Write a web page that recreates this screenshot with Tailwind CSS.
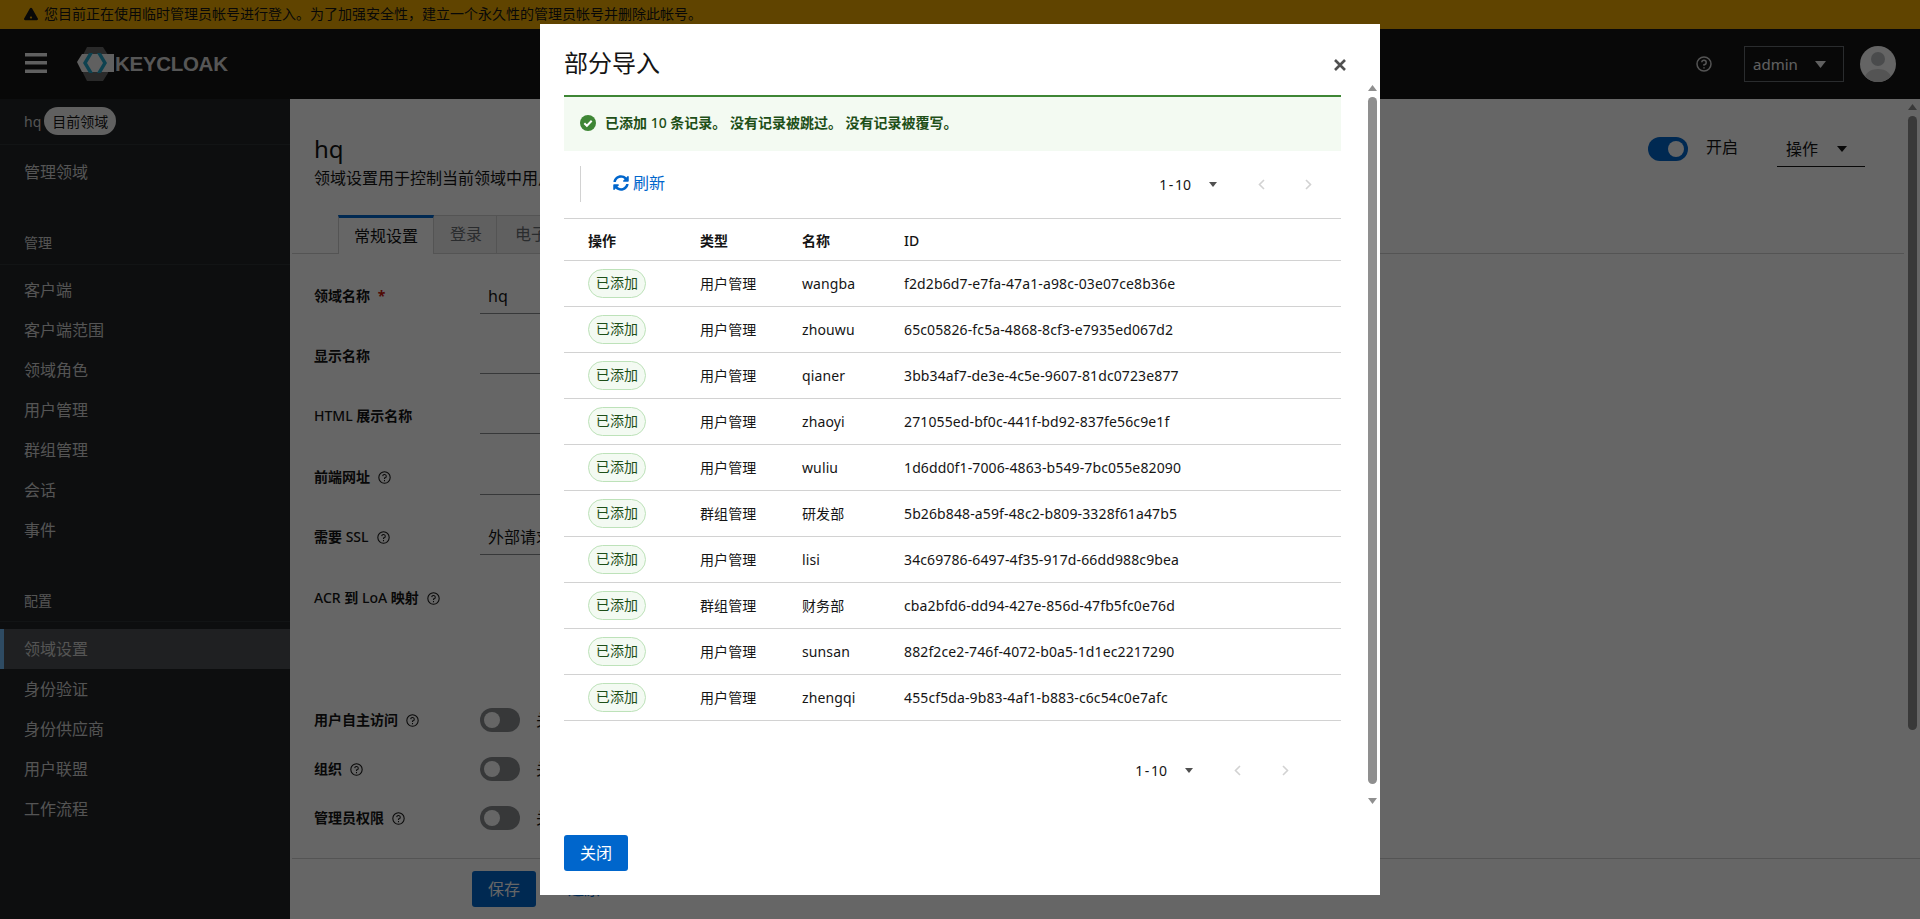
<!DOCTYPE html>
<html lang="zh-CN">
<head>
  <meta charset="UTF-8">
  <title>Keycloak 部分导入</title>
  <script src="https://cdn.jsdelivr.net/npm/@tailwindcss/browser@4"></script>
</head>
<body class="h-screen overflow-hidden font-['Noto_Sans','Noto_Sans_CJK_SC',sans-serif] text-[14px] text-[#151515]">
  <div class="h-screen flex flex-col">
    <!-- Warning banner -->
    <div class="h-[29px] shrink-0 bg-[#f0ab00] flex items-center pl-6 pb-[2px] gap-1.5 text-[14px]">
      <svg class="w-[14px] h-[14px]" viewBox="0 0 576 512"><path fill="#151515" d="M569.5 440 329.6 24c-18.400-32-64.700-32-83.200 0L6.500 440c-18.400 31.900 4.600 72 41.600 72H528c36.800 0 60-40 41.500-72zM288 354c25.400 0 46 20.600 46 46s-20.600 46-46 46-46-20.600-46-46 20.600-46 46-46zm-43.700-165.400 7.400 136c.3 6.400 5.600 11.400 12 11.400h48.500c6.400 0 11.600-5 12-11.400l7.400-136c.4-6.900-5.100-12.600-12-12.600h-63.400c-6.900 0-12.300 5.700-11.900 12.600z"/></svg>
      <span>您目前正在使用临时管理员帐号进行登入。为了加强安全性，建立一个永久性的管理员帐号并删除此帐号。</span>
    </div>

    <!-- Masthead -->
    <header class="h-[70px] shrink-0 bg-[#151515] flex items-center text-white">
      <svg class="ml-[25px] mb-[2px] w-[22px] h-[20px]" viewBox="0 0 22 20"><path fill="#f0f0f0" d="M0 0h22v3.500H0zM0 8h22v3.500H0zM0 16.500h22V20H0z"/></svg>
      <div class="ml-[30px] flex items-center">
        <svg class="w-[38px] h-[34px]" viewBox="0 0 38 34">
          <path fill="#6a6a6a" d="M10 0h16l5 8v18l-5 8H10l-4-8V8z"/>
          <path fill="#f0f0f0" d="M0 15l5-8h32v18H5z"/>
          <path fill="#25a5c8" d="M12 6h4l-6 10 6 10h-4L6 16zM24 6h-4l6 10-6 10h4l6-10z"/>
        </svg>
        <span class="font-['Liberation_Sans'] font-bold text-[20.500px] tracking-[-0.3px] text-[#d8d8d8]">KEYCLOAK</span>
      </div>
      <svg class="ml-auto w-4 h-4" viewBox="0 0 16 16" fill="none" stroke="#d2d2d2" stroke-width="1.500"><circle cx="8" cy="8" r="7"/><path d="M5.800 6.300A2.200 2.200 0 1 1 8 8.700v1.100"/><path d="M8 11.200v1.400"/></svg>
      <div class="ml-[32px] w-[100px] h-[36px] border border-[#6a6e73] flex items-center pl-2 text-[15px] text-[#f0f0f0]">
        admin
        <svg class="ml-[17px] w-[11px] h-[7px]" viewBox="0 0 11 7"><path fill="#f0f0f0" d="M0 0h11L5.500 7z"/></svg>
      </div>
      <svg class="ml-4 mr-6 w-9 h-9 rounded-full" viewBox="0 0 36 36">
        <rect width="36" height="36" fill="#fafafa"/>
        <circle cx="18" cy="13" r="7" fill="#b8bbbe"/>
        <path fill="#d2d2d2" d="M4 36c0-9 6-13 14-13s14 4 14 13z"/>
      </svg>
    </header>

    <div class="flex flex-1 min-h-0">
      <!-- Sidebar -->
      <nav class="w-[290px] shrink-0 bg-[#212427] text-[#d2d2d2] text-[16px]">
        <div class="h-[46px] flex items-center pl-6 pb-[1px] gap-[3px] border-b border-[#2f3235]">
          <span class="text-[14px]">hq</span>
          <span class="h-[28px] px-[8px] rounded-full bg-[#f0f0f0] text-[#151515] text-[14px] flex items-center">目前领域</span>
        </div>
        <div class="h-[54px] flex items-center pl-6">管理领域</div>
        <div class="mt-[22px] h-[44px] flex items-center pl-6 text-[14px] border-b border-[#2f3235]">管理</div>
        <ul class="mt-[5px]">
          <li class="h-10 flex items-center pl-6">客户端</li>
          <li class="h-10 flex items-center pl-6">客户端范围</li>
          <li class="h-10 flex items-center pl-6">领域角色</li>
          <li class="h-10 flex items-center pl-6">用户管理</li>
          <li class="h-10 flex items-center pl-6">群组管理</li>
          <li class="h-10 flex items-center pl-6">会话</li>
          <li class="h-10 flex items-center pl-6">事件</li>
        </ul>
        <div class="mt-[30px] h-[42px] flex items-center pl-6 text-[14px] border-b border-[#2f3235]">配置</div>
        <ul class="mt-[7px]">
          <li class="h-10 pb-[1px] flex items-center pl-5 border-l-4 border-[#73bcf7] bg-[#4f5255]">领域设置</li>
          <li class="h-10 pb-[1px] flex items-center pl-6">身份验证</li>
          <li class="h-10 pb-[1px] flex items-center pl-6">身份供应商</li>
          <li class="h-10 pb-[1px] flex items-center pl-6">用户联盟</li>
          <li class="h-10 pb-[1px] flex items-center pl-6">工作流程</li>
        </ul>
      </nav>

      <!-- Realm settings -->
      <main class="flex-1 min-w-0 bg-white flex flex-col relative">
        <div class="flex h-[116px] shrink-0 pl-6 pr-[55px] pt-[34px]">
          <div>
            <h1 class="text-[24px] leading-[32px]">hq</h1>
            <p class="text-[16px] leading-[24px] mt-[1px]">领域设置用于控制当前领域中用户、应用程序、角色和组的选项。</p>
          </div>
          <div class="ml-auto flex items-start">
            <span class="mt-[4px] w-10 h-6 rounded-full bg-[#06c] flex items-center justify-end pr-1"><span class="w-4 h-4 rounded-full bg-white"></span></span>
            <span class="ml-[18px] mt-[2px] leading-6 text-[16px]">开启</span>
            <div class="ml-[39px] w-[88px] h-[34px] pb-[2px] border-b border-[#151515] flex items-center pl-[9px] text-[16px]">
              操作
              <svg class="ml-[19px] w-[10px] h-[6px]" viewBox="0 0 10 6"><path fill="#151515" d="M0 0h10L5 6z"/></svg>
            </div>
          </div>
        </div>

        <div class="h-[39px] shrink-0 flex border-b border-[#d2d2d2] ml-[2px] mr-[16px] pl-[46px]">
          <div class="w-[96px] h-[39px] pb-[1px] border-t-[3px] border-x border-t-[#06c] border-x-[#d2d2d2] bg-white flex items-center justify-center text-[16px]">常规设置</div>
          <div class="w-[63px] pl-[2px] pb-[1px] border-t border-r border-[#d2d2d2] bg-[#f0f0f0] text-[#6a6e73] flex items-center justify-center text-[16px]">登录</div>
          <div class="w-[100px] pb-[1px] border-t border-r border-[#d2d2d2] bg-[#f0f0f0] text-[#6a6e73] flex items-center pl-[18px] text-[16px]">电子邮件</div>
        </div>

        <form class="flex-1 pl-6 pt-[24px]">
          <div class="flex items-center h-[36px] mb-[24px]">
            <label class="w-[166px] pb-[2px] font-bold">领域名称 <span class="text-[#c9190b] ml-1">*</span></label>
            <span class="w-[300px] h-[36px] border-b border-[#8a8d90] flex items-center pl-2 text-[16px]">hq</span>
          </div>
          <div class="flex items-center h-[36px] mb-[24px]">
            <label class="w-[166px] pb-[2px] font-bold">显示名称</label>
            <span class="w-[300px] h-[36px] border-b border-[#8a8d90]"></span>
          </div>
          <div class="flex items-center h-[36px] mb-[25px]">
            <label class="w-[166px] pb-[2px] font-bold"><span class="font-medium">HTML</span> 展示名称</label>
            <span class="w-[300px] h-[36px] border-b border-[#8a8d90]"></span>
          </div>
          <div class="flex items-center h-[36px] mb-[24px]">
            <label class="w-[166px] pb-[2px] font-bold flex items-center gap-2">前端网址
              <svg class="w-[13px] h-[13px] mt-[2px]" viewBox="0 0 16 16" fill="none" stroke="#151515" stroke-width="1.300"><circle cx="8" cy="8" r="7"/><path d="M5.800 6.300A2.200 2.200 0 1 1 8 8.700v1.100M8 11.200v1.400"/></svg>
            </label>
            <span class="w-[300px] h-[36px] border-b border-[#8a8d90]"></span>
          </div>
          <div class="flex items-center h-[36px] mb-[25px]">
            <label class="w-[166px] pb-[2px] font-bold flex items-center gap-2"><span>需要 <span class="font-medium">SSL</span></span>
              <svg class="w-[13px] h-[13px] mt-[2px]" viewBox="0 0 16 16" fill="none" stroke="#151515" stroke-width="1.300"><circle cx="8" cy="8" r="7"/><path d="M5.800 6.300A2.200 2.200 0 1 1 8 8.700v1.100M8 11.200v1.400"/></svg>
            </label>
            <span class="w-[300px] h-[36px] border-b border-[#8a8d90] flex items-center pl-2 text-[16px]">外部请求</span>
          </div>
          <div class="flex items-center h-[36px] mb-[92px]">
            <label class="w-[166px] pb-[2px] font-bold flex items-center gap-2"><span><span class="font-medium">ACR</span> 到 <span class="font-medium">LoA</span> 映射</span>
              <svg class="w-[13px] h-[13px] mt-[2px]" viewBox="0 0 16 16" fill="none" stroke="#151515" stroke-width="1.300"><circle cx="8" cy="8" r="7"/><path d="M5.800 6.300A2.200 2.200 0 1 1 8 8.700v1.100M8 11.200v1.400"/></svg>
            </label>
          </div>
          <div class="flex items-center h-6 mb-[25px]">
            <label class="w-[166px] pb-[2px] font-bold flex items-center gap-2">用户自主访问
              <svg class="w-[13px] h-[13px] mt-[2px]" viewBox="0 0 16 16" fill="none" stroke="#151515" stroke-width="1.300"><circle cx="8" cy="8" r="7"/><path d="M5.800 6.300A2.200 2.200 0 1 1 8 8.700v1.100M8 11.200v1.400"/></svg>
            </label>
            <span class="w-10 h-6 rounded-full bg-[#8a8d90] flex items-center pl-1"><span class="w-4 h-4 rounded-full bg-white"></span></span>
            <span class="ml-4 text-[16px]">关闭</span>
          </div>
          <div class="flex items-center h-6 mb-[25px]">
            <label class="w-[166px] pb-[2px] font-bold flex items-center gap-2">组织
              <svg class="w-[13px] h-[13px] mt-[2px]" viewBox="0 0 16 16" fill="none" stroke="#151515" stroke-width="1.300"><circle cx="8" cy="8" r="7"/><path d="M5.800 6.300A2.200 2.200 0 1 1 8 8.700v1.100M8 11.200v1.400"/></svg>
            </label>
            <span class="w-10 h-6 rounded-full bg-[#8a8d90] flex items-center pl-1"><span class="w-4 h-4 rounded-full bg-white"></span></span>
            <span class="ml-4 text-[16px]">关闭</span>
          </div>
          <div class="flex items-center h-6">
            <label class="w-[166px] pb-[2px] font-bold flex items-center gap-2">管理员权限
              <svg class="w-[13px] h-[13px] mt-[2px]" viewBox="0 0 16 16" fill="none" stroke="#151515" stroke-width="1.300"><circle cx="8" cy="8" r="7"/><path d="M5.800 6.300A2.200 2.200 0 1 1 8 8.700v1.100M8 11.200v1.400"/></svg>
            </label>
            <span class="w-10 h-6 rounded-full bg-[#8a8d90] flex items-center pl-1"><span class="w-4 h-4 rounded-full bg-white"></span></span>
            <span class="ml-4 text-[16px]">关闭</span>
          </div>
        </form>

        <div class="h-[61px] shrink-0 ml-[2px] border-t border-[#d2d2d2] flex items-center pl-[180px] gap-[32px] text-[16px]">
          <span class="w-16 h-9 rounded-[3px] bg-[#06c] text-white flex items-center justify-center">保存</span>
          <span class="text-[#06c]">还原</span>
        </div>

        <!-- Page scrollbar -->
        <div class="absolute right-[3px] top-[5px] w-[9px] flex flex-col items-center">
          <svg class="w-[9px] h-[6px] shrink-0" viewBox="0 0 9 6"><path fill="#8f8f8f" d="M0 6h9L4.500 0z"/></svg>
          <div class="mt-[6px] h-[614px] w-[9px] rounded-full bg-[#8f8f8f]"></div>
        </div>
      </main>
    </div>
  </div>

  <!-- Backdrop + import dialog -->
  <div class="fixed inset-0 bg-black/60 flex justify-center items-start pt-[24px]">
    <section class="w-[840px] h-[871px] bg-white flex flex-col relative">
      <div class="h-[71px] shrink-0 pl-6 pr-[34px] pt-[19px] flex justify-between">
        <h2 class="text-[24px] leading-[40px]">部分导入</h2>
        <svg class="mt-[16px] w-[12px] h-[12px]" viewBox="0 0 12 12"><path stroke="#505050" stroke-width="2.600" d="M1 1l10 10M11 1L1 11"/></svg>
      </div>

      <div class="flex-1 min-h-0 relative pl-6 pr-[39px]">
        <div class="h-[56px] pb-[3px] bg-[#f3faf2] border-t-2 border-[#3e8635] flex items-center pl-4 gap-[9px] font-bold text-[#1e4f18]">
          <svg class="w-[16px] h-[16px]" viewBox="0 0 16 16"><circle cx="8" cy="8" r="8" fill="#3e8635"/><path d="M4.300 8.200l2.600 2.600 4.800-5" fill="none" stroke="#fff" stroke-width="2"/></svg>
          <span>已添加 <span class="font-medium">10</span> 条记录。 没有记录被跳过。 没有记录被覆写。</span>
        </div>

        <div class="h-[68px] flex items-start pt-[15px] border-b border-[#d2d2d2]">
          <div class="ml-4 h-[36px] pb-[2px] border-l border-[#d2d2d2] flex items-center pl-[32px] gap-[4px] text-[#06c] text-[16px]">
            <svg class="w-[16px] h-[16px]" viewBox="0 0 512 512"><path fill="#06c" d="M370.700 133.300C339.500 104 298.900 88 255.800 88c-77.500 0-144.500 53.100-163 126.900-1.300 5.400-6.100 9.100-11.600 9.100H24.100c-7.500 0-13.200-6.800-11.800-14.200C33.900 94.900 134.800 8 256 8c66.400 0 126.800 26.100 171.300 68.700L463 41c15.100-15.100 41-4.400 41 17v134c0 13.300-10.700 24-24 24H346c-21.400 0-32.100-25.900-17-41l41.700-41.700zM32 296h134c21.400 0 32.100 25.900 17 41l-41.700 41.700c31.200 29.300 71.800 45.300 114.900 45.300 77.400 0 144.500-53.100 163-126.800 1.300-5.400 6.100-9.100 11.600-9.100h57.300c7.500 0 13.200 6.800 11.800 14.200C478.100 417.100 377.200 504 256 504c-66.400 0-126.800-26.100-171.300-68.700L49 471c-15.100 15.100-41 4.400-41-17V320c0-13.300 10.700-24 24-24z"/></svg>
            刷新
          </div>
          <div class="ml-auto h-[36px] flex items-center text-[14px]">
            <span class="[word-spacing:-2px]">1 - 10</span>
            <svg class="ml-[18px] w-[8px] h-[5px]" viewBox="0 0 8 5"><path fill="#505050" d="M0 0h8L4 5z"/></svg>
            <svg class="ml-[41px] w-[7px] h-[11px]" viewBox="0 0 7 11" fill="none" stroke="#d2d2d2" stroke-width="1.600"><path d="M6 1L1.500 5.500 6 10"/></svg>
            <svg class="ml-[40px] mr-[29px] w-[7px] h-[11px]" viewBox="0 0 7 11" fill="none" stroke="#d2d2d2" stroke-width="1.600"><path d="M1 1l4.500 4.500L1 10"/></svg>
          </div>
        </div>

        <table class="w-full table-fixed border-collapse tracking-[0.12px]">
          <thead>
            <tr class="h-[41px] border-b border-[#d2d2d2] text-left">
              <th class="w-[136px] pl-6 pt-[3px] font-bold">操作</th>
              <th class="w-[102px] pt-[3px] font-bold">类型</th>
              <th class="w-[101px] pt-[3px] font-bold">名称</th>
              <th class="pt-[3px] pl-[1px] font-medium">ID</th>
            </tr>
          </thead>
          <tbody>
            <tr class="h-[46px] border-b border-[#d2d2d2]"><td class="pl-6"><span class="w-[58px] h-[29px] pb-[1px] rounded-[15px] border border-[#bde2b9] bg-[#f3faf2] text-[#1e4f18] flex items-center justify-center">已添加</span></td><td>用户管理</td><td>wangba</td><td class="pl-[1px]">f2d2b6d7-e7fa-47a1-a98c-03e07ce8b36e</td></tr>
            <tr class="h-[46px] border-b border-[#d2d2d2]"><td class="pl-6"><span class="w-[58px] h-[29px] pb-[1px] rounded-[15px] border border-[#bde2b9] bg-[#f3faf2] text-[#1e4f18] flex items-center justify-center">已添加</span></td><td>用户管理</td><td>zhouwu</td><td class="pl-[1px]">65c05826-fc5a-4868-8cf3-e7935ed067d2</td></tr>
            <tr class="h-[46px] border-b border-[#d2d2d2]"><td class="pl-6"><span class="w-[58px] h-[29px] pb-[1px] rounded-[15px] border border-[#bde2b9] bg-[#f3faf2] text-[#1e4f18] flex items-center justify-center">已添加</span></td><td>用户管理</td><td>qianer</td><td class="pl-[1px]">3bb34af7-de3e-4c5e-9607-81dc0723e877</td></tr>
            <tr class="h-[46px] border-b border-[#d2d2d2]"><td class="pl-6"><span class="w-[58px] h-[29px] pb-[1px] rounded-[15px] border border-[#bde2b9] bg-[#f3faf2] text-[#1e4f18] flex items-center justify-center">已添加</span></td><td>用户管理</td><td>zhaoyi</td><td class="pl-[1px]">271055ed-bf0c-441f-bd92-837fe56c9e1f</td></tr>
            <tr class="h-[46px] border-b border-[#d2d2d2]"><td class="pl-6"><span class="w-[58px] h-[29px] pb-[1px] rounded-[15px] border border-[#bde2b9] bg-[#f3faf2] text-[#1e4f18] flex items-center justify-center">已添加</span></td><td>用户管理</td><td>wuliu</td><td class="pl-[1px]">1d6dd0f1-7006-4863-b549-7bc055e82090</td></tr>
            <tr class="h-[46px] border-b border-[#d2d2d2]"><td class="pl-6"><span class="w-[58px] h-[29px] pb-[1px] rounded-[15px] border border-[#bde2b9] bg-[#f3faf2] text-[#1e4f18] flex items-center justify-center">已添加</span></td><td>群组管理</td><td>研发部</td><td class="pl-[1px]">5b26b848-a59f-48c2-b809-3328f61a47b5</td></tr>
            <tr class="h-[46px] border-b border-[#d2d2d2]"><td class="pl-6"><span class="w-[58px] h-[29px] pb-[1px] rounded-[15px] border border-[#bde2b9] bg-[#f3faf2] text-[#1e4f18] flex items-center justify-center">已添加</span></td><td>用户管理</td><td>lisi</td><td class="pl-[1px]">34c69786-6497-4f35-917d-66dd988c9bea</td></tr>
            <tr class="h-[46px] border-b border-[#d2d2d2]"><td class="pl-6"><span class="w-[58px] h-[29px] pb-[1px] rounded-[15px] border border-[#bde2b9] bg-[#f3faf2] text-[#1e4f18] flex items-center justify-center">已添加</span></td><td>群组管理</td><td>财务部</td><td class="pl-[1px]">cba2bfd6-dd94-427e-856d-47fb5fc0e76d</td></tr>
            <tr class="h-[46px] border-b border-[#d2d2d2]"><td class="pl-6"><span class="w-[58px] h-[29px] pb-[1px] rounded-[15px] border border-[#bde2b9] bg-[#f3faf2] text-[#1e4f18] flex items-center justify-center">已添加</span></td><td>用户管理</td><td>sunsan</td><td class="pl-[1px]">882f2ce2-746f-4072-b0a5-1d1ec2217290</td></tr>
            <tr class="h-[46px] border-b border-[#d2d2d2]"><td class="pl-6"><span class="w-[58px] h-[29px] pb-[1px] rounded-[15px] border border-[#bde2b9] bg-[#f3faf2] text-[#1e4f18] flex items-center justify-center">已添加</span></td><td>用户管理</td><td>zhengqi</td><td class="pl-[1px]">455cf5da-9b83-4af1-b883-c6c54c0e7afc</td></tr>
          </tbody>
        </table>

        <div class="mt-[32px] h-[36px] flex items-center justify-end text-[14px]">
          <span class="[word-spacing:-2px]">1 - 10</span>
          <svg class="ml-[18px] w-[8px] h-[5px]" viewBox="0 0 8 5"><path fill="#505050" d="M0 0h8L4 5z"/></svg>
          <svg class="ml-[41px] w-[7px] h-[11px]" viewBox="0 0 7 11" fill="none" stroke="#d2d2d2" stroke-width="1.600"><path d="M6 1L1.500 5.500 6 10"/></svg>
          <svg class="ml-[41px] mr-[52px] w-[7px] h-[11px]" viewBox="0 0 7 11" fill="none" stroke="#d2d2d2" stroke-width="1.600"><path d="M1 1l4.500 4.500L1 10"/></svg>
        </div>

        <!-- Modal scrollbar -->
        <div class="absolute right-[3px] top-[-10px] h-[722px] w-[9px] flex flex-col items-center">
          <svg class="w-[9px] h-[6px] shrink-0" viewBox="0 0 9 6"><path fill="#8f8f8f" d="M0 6h9L4.500 0z"/></svg>
          <div class="mt-[6px] h-[687px] w-[9px] rounded-full bg-[#8f8f8f]"></div>
          <svg class="mt-[14px] w-[9px] h-[6px] shrink-0" viewBox="0 0 9 6"><path fill="#8f8f8f" d="M0 0h9L4.500 6z"/></svg>
        </div>
      </div>

      <div class="h-[60px] shrink-0 pl-6 pb-[24px]">
        <button class="w-16 h-9 rounded-[3px] bg-[#06c] text-white text-[16px]">关闭</button>
      </div>
    </section>
  </div>
</body>
</html>
